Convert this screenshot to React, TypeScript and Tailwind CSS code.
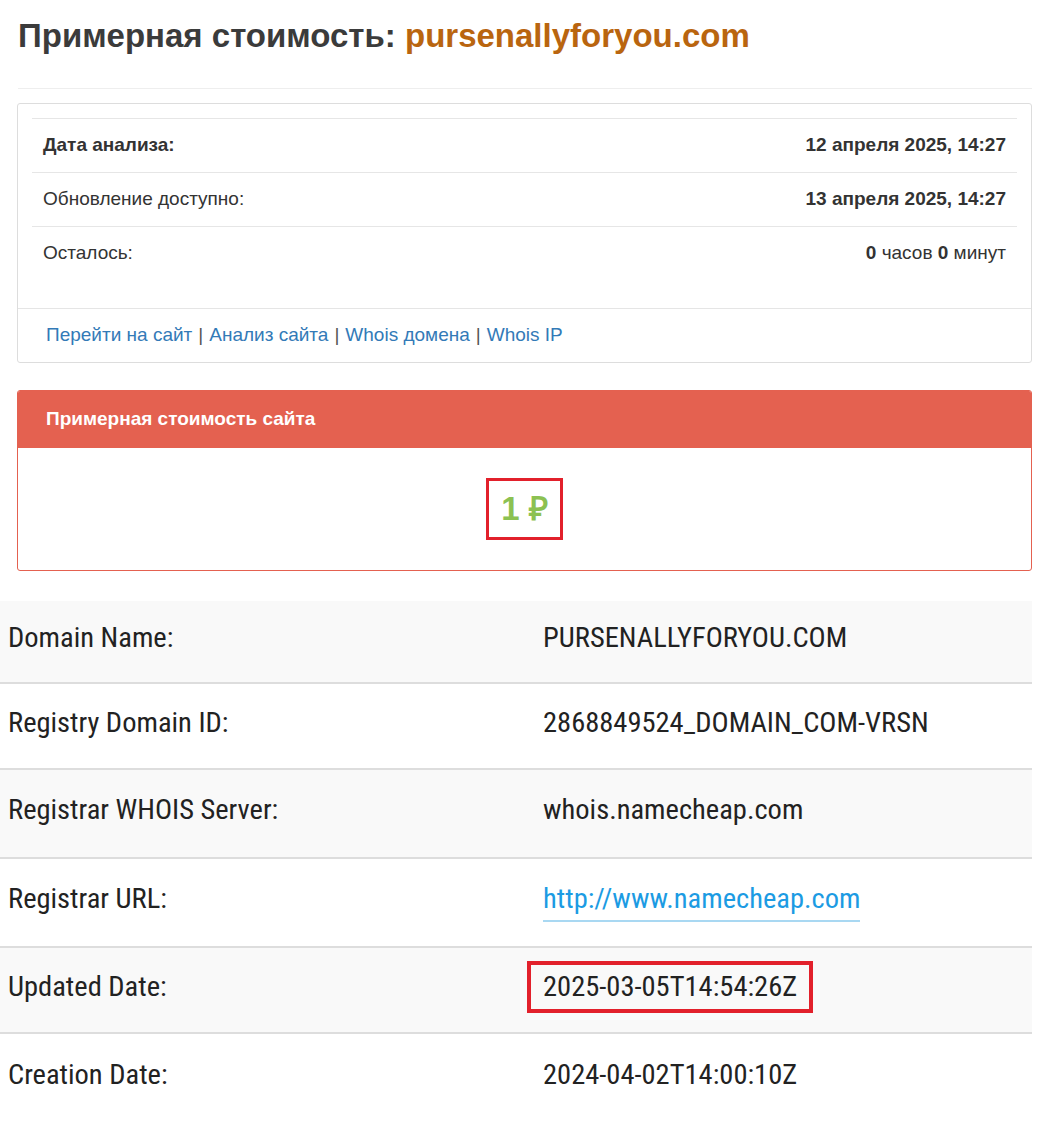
const infoRows = [
  { label: 'Дата анализа:', value: <b>12 апреля 2025, 14:27</b>, boldLabel: true },
  { label: 'Обновление доступно:', value: <b>13 апреля 2025, 14:27</b> },
  {
    label: 'Осталось:',
    value: (
      <>
        <b>0</b> часов <b>0</b> минут
      </>
    ),
  },
]

const whoisRows = [
  { label: 'Domain Name:', value: 'PURSENALLYFORYOU.COM', height: 'h-[81px]' },
  { label: 'Registry Domain ID:', value: '2868849524_DOMAIN_COM-VRSN', height: 'h-[86px]' },
  { label: 'Registrar WHOIS Server:', value: 'whois.namecheap.com', height: 'h-[89px]' },
  { label: 'Registrar URL:', value: 'http://www.namecheap.com', link: true, height: 'h-[89px]' },
  { label: 'Updated Date:', value: '2025-03-05T14:54:26Z', marked: true, height: 'h-[86px]' },
  { label: 'Creation Date:', value: '2024-04-02T14:00:10Z', height: 'h-[90px]' },
]

const links = ['Перейти на сайт', 'Анализ сайта', 'Whois домена', 'Whois IP']

export default function App() {
  return (
    <div className="w-[1042px] min-h-[1123px] bg-white font-['Liberation_Sans',Arial,sans-serif] text-[#333]">
      <div className="px-[18px] pt-[13px] pr-[10px]">
        <h1 className="text-[33px] font-bold leading-[46px] text-[#3b3b3b]">
          Примерная стоимость: <span className="text-[#b9650f]">pursenallyforyou.com</span>
        </h1>
        <div className="mt-[29px] border-t border-[#eee]" />

        <div className="mt-[14px] -ml-px rounded-[3px] border border-[#ddd] bg-white">
          <div className="px-[14px] pt-[14px] pb-[28px]">
            {infoRows.map((row) => (
              <div
                key={row.label}
                className="flex h-[54px] items-center justify-between border-t border-[#e6e6e6] px-[11px] text-[19px]"
              >
                <span className={row.boldLabel ? 'font-bold' : ''}>{row.label}</span>
                <span>{row.value}</span>
              </div>
            ))}
          </div>
          <div className="flex h-[54px] items-center border-t border-[#e5e5e5] px-[28px] text-[19px] text-[#555]">
            {links.map((link, i) => (
              <span key={link}>
                {i > 0 && <span className="px-[6px]">|</span>}
                <a className="text-[#337ab7]">{link}</a>
              </span>
            ))}
          </div>
        </div>

        <div className="mt-[27px] -ml-px overflow-hidden rounded-[3px] border border-[#e46150]">
          <div className="flex h-[57px] items-center bg-[#e46150] px-[28px] text-[19px] font-bold text-white">
            Примерная стоимость сайта
          </div>
          <div className="flex h-[122px] items-center justify-center">
            <div className="flex h-[62px] w-[77px] items-center justify-center border-[3px] border-[#e2202b] text-[33px] font-bold text-[#8cc152]">
              1 ₽
            </div>
          </div>
        </div>
      </div>

      <div className="mt-[30px] w-[1032px] font-['Roboto_Condensed','Liberation_Sans_Narrow','DejaVu_Sans_Condensed',sans-serif] text-[28.5px] text-[#222]">
        {whoisRows.map((row, i) => (
          <div
            key={row.label}
            className={`grid ${row.height} grid-cols-[543px_1fr] items-center ${i > 0 ? 'border-t-2 border-[#ddd]' : ''} ${i % 2 === 0 ? 'bg-[#f9f9f9]' : 'bg-white'}`}
          >
            <div className="pl-[8px] pb-[6px]">{row.label}</div>
            <div className="pb-[6px]">
              {row.link ? (
                <a className="border-b-2 border-[#a9d8f2] pb-[5px] text-[#1c9be3]">{row.value}</a>
              ) : row.marked ? (
                <span className="-ml-[16px] inline-block border-[4px] border-[#e2202b] px-[12px] py-[1px]">{row.value}</span>
              ) : (
                row.value
              )}
            </div>
          </div>
        ))}
      </div>
    </div>
  )
}
